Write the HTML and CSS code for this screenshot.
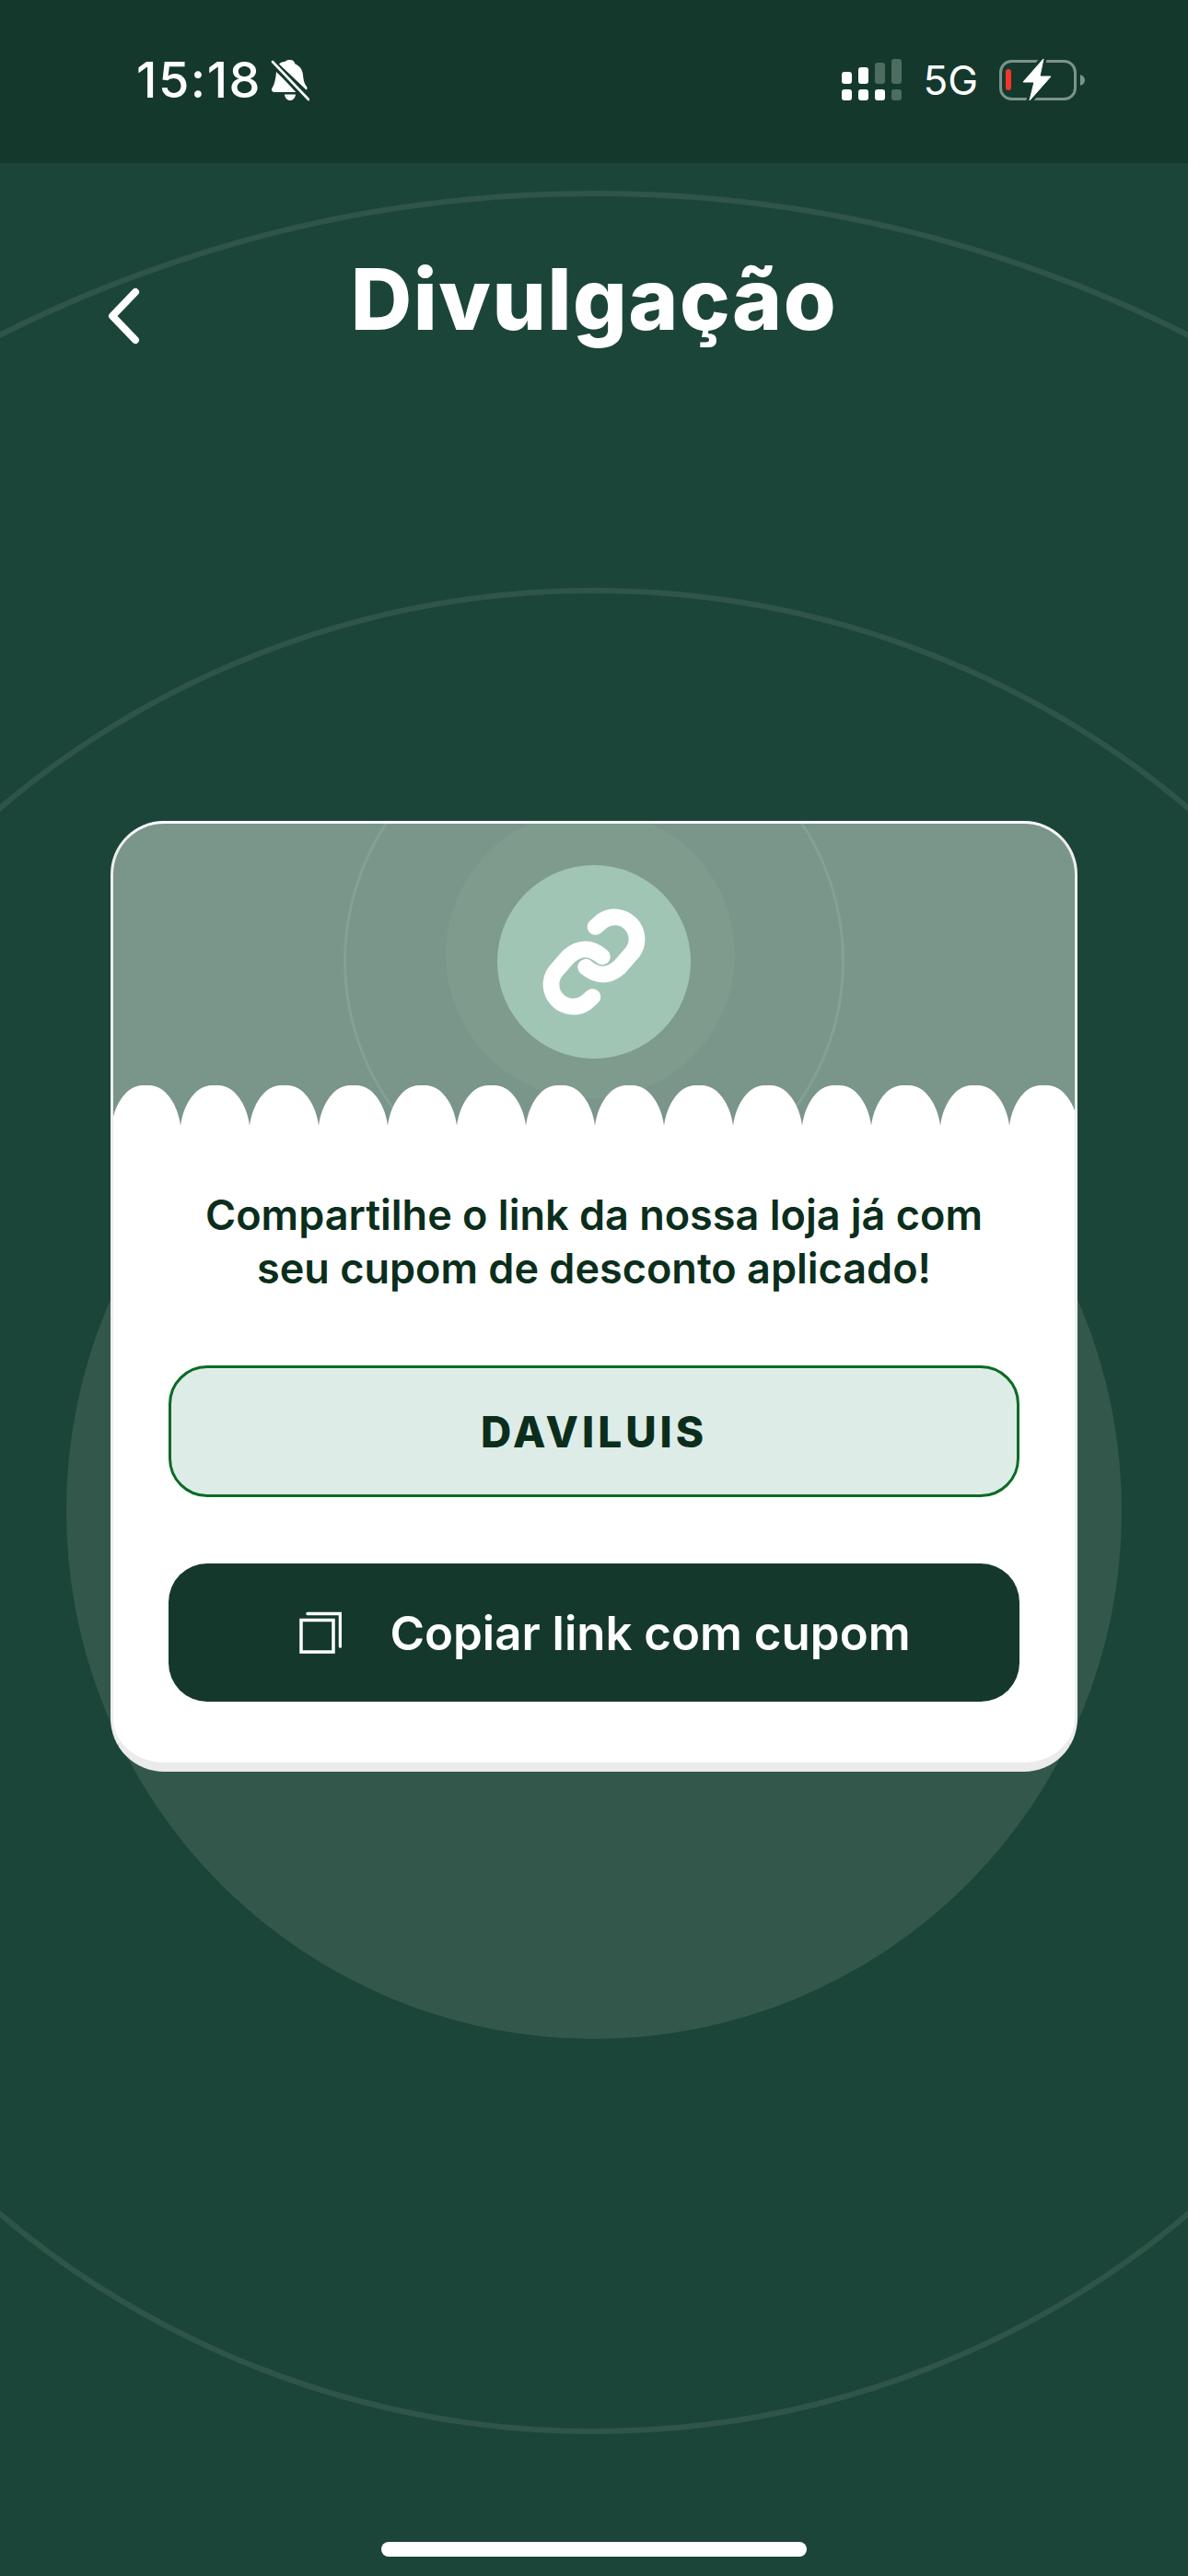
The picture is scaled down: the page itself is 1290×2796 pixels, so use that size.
FILE: index.html

```html
<!DOCTYPE html>
<html lang="pt-BR">
<head>
    <meta charset="UTF-8">
    <meta name="viewport" content="width=device-width, initial-scale=1.0">
    <title>Divulgação</title>
    <link rel="stylesheet" href="styles.css">
</head>
<body>
    <div class="screen">
        <!-- Decorative circles behind everything -->
        <div class="bg-fill"></div>
        <div class="bg-ring bg-ring-inner"></div>
        <div class="bg-ring bg-ring-outer"></div>

        <div class="status-bar">
            <div class="status-left">
                <span class="clock">15:18</span>
                <svg class="bell" viewBox="0 0 42 46" width="42" height="46">
                    <path fill="#fff" d="M21 1c3 0 5 2 5.500 4.500 5 2 8 6 8.500 12 .5 5 1 9 4 12.500 1 1.500 .5 3-.5 3.500L9 5.500C11 3.500 13 3 15.500 3 16.500 1.500 18.500 1 21 1zM6 14L29 36H4c-2.500 0-4-2.500-2.500-4.500C4.500 27 5.500 20 6 14zM15 38.500h12c-.5 4-3 6.500-6 6.500s-5.500-2.500-6-6.500z"/>
                    <path stroke="#14392c" stroke-width="5" d="M1 4l38 41"/>
                    <path stroke="#fff" stroke-width="2.600" stroke-linecap="round" d="M2 3l39 41"/>
                </svg>
            </div>
            <div class="status-right">
                <svg class="signal" viewBox="0 0 65 46" width="65" height="46">
                    <g fill="#fff">
                        <rect x="0" y="14" width="11" height="13" rx="3"/>
                        <rect x="18" y="9" width="11" height="18" rx="3"/>
                        <rect x="0" y="33" width="11" height="12" rx="3"/>
                        <rect x="18" y="33" width="11" height="12" rx="3"/>
                        <rect x="36" y="33" width="11" height="12" rx="3"/>
                    </g>
                    <g fill="#4c6d60">
                        <rect x="36" y="4" width="11" height="23" rx="3"/>
                        <rect x="54" y="0" width="11" height="27" rx="3"/>
                        <rect x="54" y="33" width="11" height="12" rx="3"/>
                    </g>
                </svg>
                <span class="network">5G</span>
                <svg class="battery" viewBox="0 0 94 48" width="94" height="48">
                    <rect x="1.500" y="3.500" width="81" height="41" rx="12" fill="none" stroke="#7d9389" stroke-width="3"/>
                    <path fill="#7d9389" d="M88 18c3 1 5 3 5 6s-2 5-5 6z"/>
                    <rect x="7" y="12" width="6" height="23" rx="3" fill="#f5352a"/>
                    <path fill="#14392c" stroke="#14392c" stroke-width="7" stroke-linejoin="round" d="M48 1L26 26h12l-5 20 23-26H44z"/>
                    <path fill="#fff" stroke="#fff" stroke-width="1" stroke-linejoin="round" d="M48 1L26 26h12l-5 20 23-26H44z"/>
                </svg>
            </div>
        </div>

        <header class="top-bar">
            <a class="back-btn" href="#" aria-label="Voltar">
                <svg viewBox="0 0 36 62" width="36" height="62">
                    <path fill="none" stroke="#fff" stroke-width="8" stroke-linecap="round" stroke-linejoin="round" d="M30 5L5 31l25 26"/>
                </svg>
            </a>
            <h1>Divulgação</h1>
        </header>

        <main class="content">
            <section class="card">
                <div class="card-banner">
                    <div class="banner-ring"></div>
                    <div class="banner-halo"></div>
                    <div class="banner-icon">
                        <svg viewBox="98 67 115 115" width="120" height="120">
                            <g fill="none" stroke="#fff" stroke-width="17" stroke-linecap="round">
                                <path d="M157 88l7-6A23 23 0 0 1 196 114l-14 16Q165 145 147 130"/>
                                <path d="M154 161l-7 6A23 23 0 0 1 115 135l14-16Q146 104 164 119"/>
                            </g>
                        </svg>
                    </div>
                    <svg class="scallops" width="100%" height="44">
                        <defs>
                            <pattern id="scallop" x="-2" y="0" width="75" height="44" patternUnits="userSpaceOnUse">
                                <path fill="#fff" d="M0 44C3 20 17 0 34 0h7c17 0 31 20 34 44z"/>
                            </pattern>
                        </defs>
                        <rect width="100%" height="44" fill="url(#scallop)"/>
                    </svg>
                </div>
                <div class="card-body">
                    <p class="card-text">Compartilhe o link da nossa loja já com seu cupom de desconto aplicado!</p>
                    <div class="coupon">DAVILUIS</div>
                    <button class="copy-btn">
                        <svg viewBox="0 0 46 46" width="46" height="46">
                            <path fill="none" stroke="#fff" stroke-width="3.500" d="M2 9.500h35v34.500H2z"/>
                            <path fill="none" stroke="#fff" stroke-width="3.500" stroke-linecap="round" d="M9 2.500h35.500V38"/>
                        </svg>
                        <span>Copiar link com cupom</span>
                    </button>
                </div>
            </section>
        </main>

        <div class="home-indicator"></div>
    </div>
</body>
</html>
```

FILE: styles.css

```css
html, body {
    margin: 0;
    padding: 0;
    background-color: #1c4539;
}

.screen {
    position: relative;
    width: 1290px;
    height: 2796px;
    overflow: hidden;
    display: flex;
    flex-direction: column;
    background-color: #1c4539;
    font-family: "Inter", "Liberation Sans", sans-serif;
    color: white;
}

/* --- Background circles --- */
.bg-fill,
.bg-ring {
    position: absolute;
    left: 50%;
    border-radius: 50%;
    transform: translateX(-50%);
    box-sizing: border-box;
}

.bg-fill {
    top: 1067px;
    width: 1146px;
    height: 1146px;
    background-color: #33584b;
}

.bg-ring {
    border: 6px solid #2f5548;
}

.bg-ring-inner {
    top: 638px;
    width: 2004px;
    height: 2004px;
}

.bg-ring-outer {
    top: 207px;
    width: 2866px;
    height: 2866px;
}

/* --- Status bar --- */
.status-bar {
    position: relative;
    height: 177px;
    flex-shrink: 0;
    box-sizing: border-box;
    padding: 0 111px 3px 148px;
    display: flex;
    justify-content: space-between;
    align-items: center;
    background-color: #14392c;
}

.status-left,
.status-right {
    display: flex;
    align-items: center;
}

.clock {
    font-size: 54px;
    font-weight: 500;
    line-height: 60px;
    letter-spacing: 1.500px;
}

.bell {
    margin-left: 10px;
}

.network {
    margin: 0 23px 0 23px;
    font-size: 44px;
    line-height: 50px;
}

/* --- Top bar --- */
.top-bar {
    position: relative;
    height: 150px;
    flex-shrink: 0;
    display: grid;
    grid-template-columns: 1fr auto 1fr;
    align-items: start;
}

.top-bar h1 {
    margin: 93px 0 0;
    font-size: 92px;
    font-weight: 800;
    line-height: 110px;
    letter-spacing: 1.500px;
}

.back-btn {
    display: block;
    margin: 135px 0 0 117px;
    line-height: 0;
}

/* --- Card --- */
.content {
    position: relative;
    display: flex;
    justify-content: center;
    padding-top: 564px;
}

.card {
    width: 1050px;
    box-sizing: border-box;
    border: 3px solid #eeeeee;
    border-top-color: white;
    border-bottom: 10px solid #ebebeb;
    border-radius: 58px;
    overflow: hidden;
    background-color: white;
}

.card-banner {
    position: relative;
    height: 328px;
    overflow: hidden;
    background-color: #7a9589;
    display: flex;
    justify-content: center;
    padding-top: 45px;
    box-sizing: border-box;
}

.banner-ring,
.banner-halo {
    position: absolute;
    left: 50%;
    border-radius: 50%;
    box-sizing: border-box;
}

.banner-ring {
    top: -123px;
    width: 544px;
    height: 544px;
    transform: translateX(-50%);
    border: 3px solid #83a195;
}

.banner-halo {
    top: -15px;
    width: 314px;
    height: 314px;
    transform: translateX(calc(-50% - 4px));
    background-color: #7f9b8e;
}

.banner-icon {
    position: relative;
    width: 210px;
    height: 210px;
    border-radius: 50%;
    background-color: #a1c5b4;
    display: flex;
    align-items: center;
    justify-content: center;
}

.scallops {
    position: absolute;
    left: 0;
    bottom: 0;
    display: block;
}

.card-body {
    padding: 68px 60px 66px;
    display: flex;
    flex-direction: column;
    align-items: stretch;
}

.card-text {
    margin: 0 20px;
    font-size: 45px;
    font-weight: 600;
    line-height: 58px;
    text-align: center;
    color: #0b2e1c;
}

.coupon {
    margin-top: 76px;
    height: 143px;
    box-sizing: border-box;
    border: 3px solid #0b6b24;
    border-radius: 42px;
    background-color: #deece8;
    display: flex;
    align-items: center;
    justify-content: center;
    font-size: 46px;
    font-weight: 800;
    letter-spacing: 4px;
    color: #0b2e1c;
}

.copy-btn {
    margin-top: 72px;
    height: 150px;
    padding-left: 30px;
    border: none;
    border-radius: 42px;
    background-color: #14392c;
    color: white;
    font-family: inherit;
    font-size: 51px;
    font-weight: 600;
    display: flex;
    align-items: center;
    justify-content: center;
    gap: 52px;
}

/* --- Home indicator --- */
.home-indicator {
    position: absolute;
    left: 414px;
    bottom: 21px;
    width: 462px;
    height: 16px;
    border-radius: 8px;
    background-color: white;
}
```
